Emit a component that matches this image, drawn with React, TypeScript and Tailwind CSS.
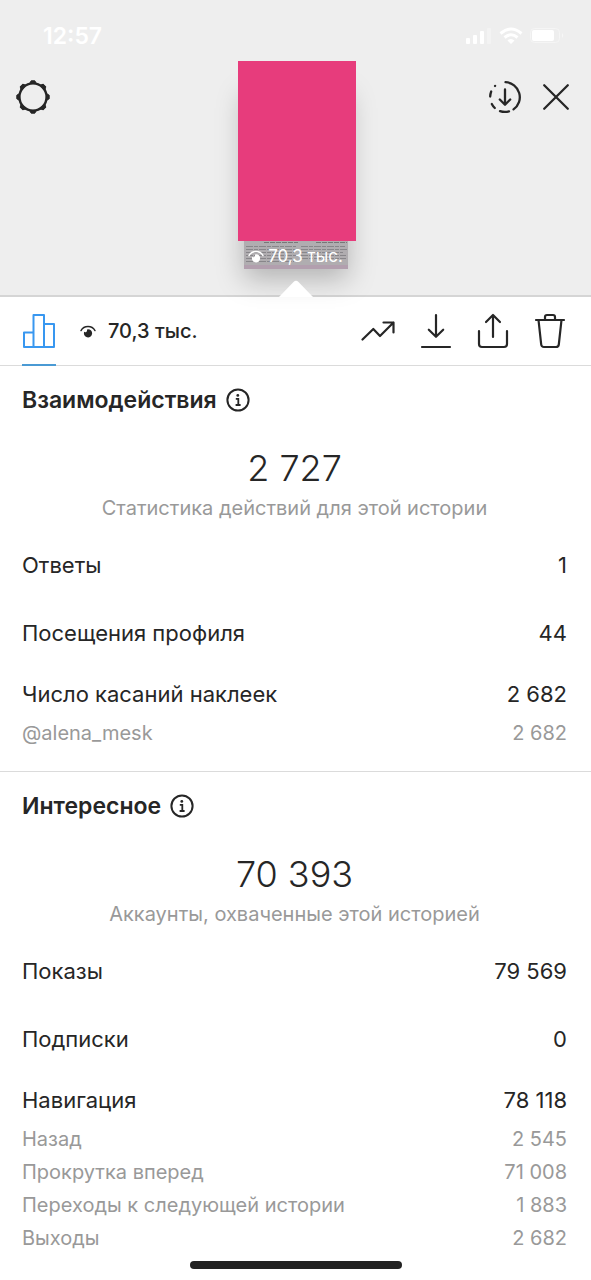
import React from 'react';

interface Stat {
  label: string;
  value: string;
}

interface StatGroup extends Stat {
  details: Stat[];
}

interface InsightsSectionProps {
  title: string;
  total: string;
  caption: string;
  stats: Stat[];
  group: StatGroup;
}

const interactions: InsightsSectionProps = {
  title: 'Взаимодействия',
  total: '2 727',
  caption: 'Статистика действий для этой истории',
  stats: [
    { label: 'Ответы', value: '1' },
    { label: 'Посещения профиля', value: '44' },
  ],
  group: {
    label: 'Число касаний наклеек',
    value: '2 682',
    details: [{ label: '@alena_mesk', value: '2 682' }],
  },
};

const discovery: InsightsSectionProps = {
  title: 'Интересное',
  total: '70 393',
  caption: 'Аккаунты, охваченные этой историей',
  stats: [
    { label: 'Показы', value: '79 569' },
    { label: 'Подписки', value: '0' },
  ],
  group: {
    label: 'Навигация',
    value: '78 118',
    details: [
      { label: 'Назад', value: '2 545' },
      { label: 'Прокрутка вперед', value: '71 008' },
      { label: 'Переходы к следующей истории', value: '1 883' },
      { label: 'Выходы', value: '2 682' },
    ],
  },
};

// Icons
const strokeProps = {
  fill: 'none',
  stroke: 'currentColor',
  strokeLinecap: 'round' as const,
  strokeLinejoin: 'round' as const,
};

const GearIcon = () => (
  <svg width="36" height="36" viewBox="0 0 36 36" fill="none" stroke="currentColor">
    <circle cx="18" cy="18" r="13.6" strokeWidth="2.4" />
    {[0, 45, 90, 135, 180, 225, 270, 315].map((angle) => (
      <path key={angle} d="M14.6 4.6 L16.2 1.8 H19.8 L21.4 4.6 Z" fill="currentColor" strokeWidth="1" strokeLinejoin="round" transform={`rotate(${angle} 18 18)`} />
    ))}
  </svg>
);

const SaveStoryIcon = () => (
  <svg width="34" height="34" viewBox="0 0 34 34" strokeWidth="2.3" {...strokeProps}>
    <path d="M17.5 2.2 A15 15 0 0 1 25.5 29.4" />
    <path d="M21 31.4 A15 15 0 0 1 12 31.1" />
    <path d="M6.8 28 A15 15 0 0 1 3.8 24" />
    <path d="M2.2 16.5 A15 15 0 0 1 3.2 11.5" />
    <path d="M7 6 L7.1 5.9" />
    <path d="M17 9.5 V24.5 M11.8 19.5 L17 24.7 L22.2 19.5" />
  </svg>
);

const CloseIcon = () => (
  <svg width="28" height="28" viewBox="0 0 28 28" strokeWidth="2.3" {...strokeProps}>
    <path d="M2.2 2.2 L25.8 25.8 M25.8 2.2 L2.2 25.8" />
  </svg>
);

const ChartIcon = () => (
  <svg width="34" height="36" viewBox="0 0 34 36" strokeWidth="2" fill="none" stroke="currentColor" strokeLinejoin="round">
    <path d="M11.5 34 H2 V19.5 H11.5 M11.5 34 V2 H22 V34 Z M22 11 H32 V34 H22" />
  </svg>
);

const EyeIcon = ({ className }: { className?: string }) => (
  <svg className={className} viewBox="0 0 16 13" fill="none">
    <path d="M1 5.6 C4 0.2 12 0.2 15 5.6" stroke="currentColor" strokeWidth="1.4" strokeLinecap="round" />
    <path d="M8 4.2 A4.1 4.1 0 1 1 4.2 6.8 A1.7 1.7 0 0 0 6.9 4.9 Q7 4.3 8 4.2 Z" fill="currentColor" />
  </svg>
);

const TrendIcon = () => (
  <svg width="34" height="22" viewBox="0 0 34 22" strokeWidth="2.2" {...strokeProps}>
    <path d="M1.5 19.5 L12.3 9 L19 16 L32.5 2.5 M22.5 2.5 H32.5 V12.5" />
  </svg>
);

const DownloadIcon = () => (
  <svg width="32" height="36" viewBox="0 0 32 36" strokeWidth="2.2" {...strokeProps}>
    <path d="M16 2 V23.5 M8.8 16.7 L16 23.8 L23.2 16.7 M2 34 H30" />
  </svg>
);

const ShareIcon = () => (
  <svg width="32" height="36" viewBox="0 0 32 36" strokeWidth="2.2" {...strokeProps}>
    <path d="M16 24 V2 M9 9 L16 2 L23 9 M2 18 V31 Q2 34 5 34 H27 Q30 34 30 31 V18" />
  </svg>
);

const TrashIcon = () => (
  <svg width="32" height="36" viewBox="0 0 32 36" strokeWidth="2.2" {...strokeProps}>
    <path d="M2 7 H30 M11 7 V4 Q11 2 13 2 H19 Q21 2 21 4 V7 M4.5 7 L7.2 31.5 Q7.5 34 10 34 H22 Q24.5 34 24.8 31.5 L27.5 7" />
  </svg>
);

const InfoIcon = () => (
  <svg width="24" height="24" viewBox="0 0 24 24" fill="none" stroke="currentColor">
    <circle cx="12" cy="12" r="10.6" strokeWidth="2" />
    <circle cx="11.8" cy="7.4" r="1.4" fill="currentColor" stroke="none" />
    <path d="M9.8 10.8 H12.3 V17 M9.6 17 H14.6" strokeWidth="1.8" />
  </svg>
);

const StatusIcons = () => (
  <svg width="102" height="20" viewBox="0 0 102 20" fill="white">
    <rect x="1" y="12" width="4" height="6" rx="1" />
    <rect x="8" y="9" width="4" height="9" rx="1" />
    <rect x="15" y="5" width="4" height="13" rx="1" />
    <rect x="22" y="2" width="4" height="16" rx="1" opacity="0.3" />
    <path d="M35.5 7.5 Q46 -1.5 56.5 7.5" fill="none" stroke="white" strokeWidth="3" />
    <path d="M39.5 11.5 Q46 6 52.5 11.5" fill="none" stroke="white" strokeWidth="3" />
    <path d="M42.5 14.5 Q46 11.5 49.5 14.5 L46 18 Z" />
    <rect x="65.5" y="2.5" width="29" height="14" rx="4" fill="none" stroke="white" opacity="0.4" />
    <rect x="67" y="4" width="22" height="11" rx="2" />
    <path d="M97 7 Q99.5 9.5 97 12 Z" opacity="0.5" />
  </svg>
);

const StoryPreview = () => (
  <div className="relative mx-auto h-[208px] w-[118px]">
    <div className="absolute top-6 right-[8px] bottom-0 left-[6px] flex items-end justify-center bg-[#b0adb0] shadow-[0_10px_26px_rgba(0,0,0,0.25)]">
      <svg className="absolute inset-x-0 bottom-0 h-[28px] w-full" viewBox="0 0 104 28" preserveAspectRatio="none">
        <path d="M20 1.5 H54 M72 1.5 H103" stroke="#777" strokeDasharray="5 1" />
        <path d="M2 5.5 H52 M57 5.5 H101 M2 8.5 H52 M57 8.5 H103 M2 11.5 H50 M57 11.5 H99 M2 14.5 H52 M57 14.5 H102 M2 17.5 H49 M57 17.5 H102 M2 20.5 H50" stroke="#88868a" strokeDasharray="7 1 4 1" />
        <rect y="24" width="104" height="4" fill="#b29fae" />
      </svg>
      <div className="relative flex items-center gap-1 text-[17px] leading-[26px] whitespace-nowrap text-white">
        <EyeIcon className="h-[13px] w-4" />
        70,3 тыс.
      </div>
    </div>
    <div className="relative h-[180px] bg-[#e73c7c]" />
  </div>
);

const InsightsSection: React.FC<InsightsSectionProps> = ({ title, total, caption, stats, group }) => (
  <section className="border-b border-[#dbdbdb] pr-6 pb-[22px] pl-[22px] last:border-b-0">
    <div className="flex h-[68px] items-center gap-[9px]">
      <h2 className="text-[23px] font-semibold">{title}</h2>
      <button aria-label={`О разделе «${title}»`}>
        <InfoIcon />
      </button>
    </div>
    <div className="pt-[10px] text-center">
      <p className="text-4xl leading-[48px] font-light">{total}</p>
      <p className="text-xl leading-8 text-[#999]">{caption}</p>
    </div>
    <dl className="pt-[7px] text-[22px]">
      {stats.map(({ label, value }) => (
        <div key={label} className="flex h-[68px] items-center justify-between">
          <dt>{label}</dt>
          <dd>{value}</dd>
        </div>
      ))}
      <div className="mt-[6px] flex h-[43px] items-center justify-between">
        <dt>{group.label}</dt>
        <dd>{group.value}</dd>
      </div>
      {group.details.map(({ label, value }) => (
        <div key={label} className="flex h-[33px] items-center justify-between text-xl text-[#999]">
          <dt>{label}</dt>
          <dd>{value}</dd>
        </div>
      ))}
    </dl>
  </section>
);

const App: React.FC = () => (
  <div className="relative min-h-screen bg-white font-['Inter','Liberation_Sans',sans-serif] text-[#262626]">
    <header className="relative h-[297px] border-b-2 border-[#d5d5d5] bg-[#eee] pt-[61px] pl-[2px]">
      <div className="absolute inset-x-0 top-0 flex items-center justify-between pt-[22px] pr-6 pl-[43px]">
        <span className="text-[23px] leading-7 font-semibold text-white">12:57</span>
        <StatusIcons />
      </div>
      <div className="absolute inset-x-0 top-[79px] flex items-center justify-between pr-[21px] pl-[15px]">
        <button aria-label="Настройки">
          <GearIcon />
        </button>
        <div className="flex items-center gap-5">
          <button aria-label="Сохранить историю">
            <SaveStoryIcon />
          </button>
          <button aria-label="Закрыть">
            <CloseIcon />
          </button>
        </div>
      </div>
      <StoryPreview />
      {/* Pointer from the panel to the selected story */}
      <svg className="absolute inset-x-0 -bottom-[2px] mx-auto" width="34" height="17" viewBox="0 0 34 17">
        <path d="M0 17 L14.5 2 Q17 -0.5 19.5 2 L34 17 Z" fill="white" />
      </svg>
    </header>

    <nav className="flex h-[69px] items-center justify-between border-b border-[#dbdbdb] pr-[25px] pl-[22px]">
      <div className="flex h-full items-center">
        <button aria-label="Статистика" className="relative flex h-full items-center text-[#3897f0]">
          <ChartIcon />
          <span className="absolute inset-x-0 -bottom-px h-[2px] bg-[#4a9ad4]" />
        </button>
        <button className="flex items-center gap-3 pl-6 text-xl font-medium">
          <EyeIcon className="h-[13px] w-4" />
          70,3 тыс.
        </button>
      </div>
      <div className="flex items-center gap-[25px]">
        <button aria-label="Продвигать">
          <TrendIcon />
        </button>
        <button aria-label="Скачать">
          <DownloadIcon />
        </button>
        <button aria-label="Поделиться">
          <ShareIcon />
        </button>
        <button aria-label="Удалить">
          <TrashIcon />
        </button>
      </div>
    </nav>

    <main>
      <InsightsSection {...interactions} />
      <InsightsSection {...discovery} />
    </main>

    <div className="absolute inset-x-0 bottom-[11px] mx-auto h-[8px] w-[212px] rounded-full bg-[#222]" />
  </div>
);

export default App;
